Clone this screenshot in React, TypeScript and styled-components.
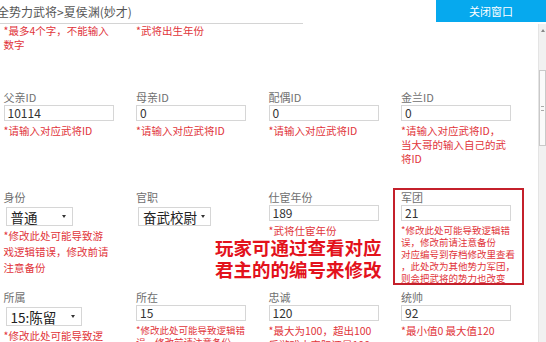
import React from "react";
import styled, { createGlobalStyle } from "styled-components";

type Control = { kind: "input" | "select"; value: string; width?: number };

type FieldData = {
  label?: string;
  control?: Control;
  hint?: string[];
  small?: boolean;
  lh?: number;
  highlight?: boolean;
};

const rows: FieldData[][] = [
  [
    { hint: ["*最多4个字，不能输入", "数字"] },
    { hint: ["*武将出生年份"] },
    {},
    {},
  ],
  [
    { label: "父亲ID", control: { kind: "input", value: "10114" }, hint: ["*请输入对应武将ID"] },
    { label: "母亲ID", control: { kind: "input", value: "0" }, hint: ["*请输入对应武将ID"] },
    { label: "配偶ID", control: { kind: "input", value: "0" }, hint: ["*请输入对应武将ID"] },
    {
      label: "金兰ID",
      control: { kind: "input", value: "0" },
      hint: ["*请输入对应武将ID，", "当大哥的输入自己的武", "将ID"],
    },
  ],
  [
    {
      label: "身份",
      control: { kind: "select", value: "普通", width: 67 },
      hint: ["*修改此处可能导致游", "戏逻辑错误，修改前请", "注意备份"],
      lh: 16,
    },
    { label: "官职", control: { kind: "select", value: "奋武校尉", width: 73 } },
    { label: "仕宦年份", control: { kind: "input", value: "189" }, hint: ["*武将仕宦年份"] },
    {
      label: "军团",
      control: { kind: "input", value: "21" },
      hint: [
        "*修改此处可能导致逻辑错",
        "误，修改前请注意备份",
        "对应编号到存档修改里查看",
        "，此处改为其他势力军团，",
        "则会把武将的势力也改变",
      ],
      small: true,
      lh: 12,
      highlight: true,
    },
  ],
  [
    {
      label: "所属",
      control: { kind: "select", value: "15:陈留", width: 76 },
      hint: ["*修改此处可能导致逻", "辑错误，修改前请注意"],
      lh: 16,
    },
    {
      label: "所在",
      control: { kind: "input", value: "15" },
      hint: ["*修改此处可能导致逻辑错", "误，修改前请注意备份"],
      small: true,
      lh: 12,
    },
    {
      label: "忠诚",
      control: { kind: "input", value: "120" },
      hint: ["*最大为100，超出100", "后游戏中实际还是100"],
      lh: 14,
    },
    { label: "统帅", control: { kind: "input", value: "92" }, hint: ["*最小值0 最大值120"] },
  ],
];

const GlobalStyle = createGlobalStyle`
  html, body {
    margin: 0;
    padding: 0;
    background: #ffffff;
    overflow: hidden;
  }
  body {
    font-family: "Noto Sans CJK SC", "Noto Sans", sans-serif;
  }
`;

const Page = styled.div`
  width: 546px;
  height: 342px;
  display: flex;
  flex-direction: column;
  overflow: hidden;
  background: #fff;
`;

const Header = styled.div`
  height: 24px;
  display: flex;
  align-items: flex-start;
  flex-shrink: 0;
`;

const Title = styled.div`
  width: 303px;
  height: 23px;
  border-bottom: 1px solid #d4d4d4;
  font-size: 12px;
  line-height: 24px;
  color: #555;
  white-space: nowrap;
  overflow: hidden;

  span {
    margin-left: -3px;
  }
`;

const CloseButton = styled.button`
  margin-left: auto;
  width: 110px;
  height: 22px;
  border: none;
  background: #06a9ee;
  color: #fff;
  font-family: inherit;
  font-size: 11px;
  padding: 0;
  cursor: pointer;
`;

const Body = styled.div`
  flex: 1;
  display: flex;
  min-height: 0;
`;

const FormArea = styled.div`
  flex: 1;
  overflow: hidden;
`;

const Grid = styled.div`
  display: grid;
  grid-template-columns: repeat(4, 110px);
  grid-template-rows: 67px 100px 100px 100px;
  column-gap: 22.5px;
  padding-left: 3.5px;
  align-items: start;
`;

const Cell = styled.div<{ $row: number; $col: number; $highlight?: boolean }>`
  grid-row: ${(p) => p.$row};
  grid-column: ${(p) => p.$col};
  position: relative;
  display: flex;
  flex-direction: column;
  align-items: flex-start;

  ${(p) =>
    p.$highlight &&
    `
    &::after {
      content: "";
      position: absolute;
      left: -8px;
      right: -13px;
      top: -3px;
      bottom: -1px;
      border: 2px solid #c4202b;
      pointer-events: none;
    }
  `}
`;

const Label = styled.div`
  font-size: 11px;
  line-height: 13px;
  color: #707070;
  white-space: nowrap;
`;

const Input = styled.div`
  box-sizing: border-box;
  margin-top: 1px;
  width: 110px;
  height: 16px;
  border: 1px solid #d6d6d6;
  padding-left: 3px;
  font-size: 12px;
  line-height: 14px;
  color: #333;
  background: #fff;
`;

const Select = styled.div<{ $w: number }>`
  box-sizing: border-box;
  margin: 3px 0 0 2px;
  width: ${(p) => p.$w}px;
  height: 19px;
  border: 1px solid #d6d6d6;
  padding: 0 6px 0 4px;
  display: flex;
  align-items: center;
  justify-content: space-between;
  font-size: 13.5px;
  color: #222;
  background: #fff;
  white-space: nowrap;

  &::after {
    content: "";
    flex-shrink: 0;
    margin-left: 4px;
    border-left: 2.5px solid transparent;
    border-right: 2.5px solid transparent;
    border-top: 3px solid #333;
  }
`;

const Hint = styled.div<{ $small?: boolean; $lh: number; $flush?: boolean }>`
  margin-top: ${(p) => (p.$flush ? 0 : p.$lh === 16 ? 2 : 3)}px;
  font-size: ${(p) => (p.$small ? 9.5 : 10.5)}px;
  line-height: ${(p) => p.$lh}px;
  color: #e1343a;
  white-space: nowrap;
`;

const Annotation = styled.div`
  grid-column: 2 / 4;
  grid-row: 3;
  justify-self: start;
  margin: 45px 0 0 79px;
  position: relative;
  z-index: 2;
  font-size: 18.5px;
  line-height: 22px;
  font-weight: 700;
  color: #e3121c;
  white-space: nowrap;
`;

const Scrollbar = styled.div`
  width: 7px;
  flex-shrink: 0;
  background: #f1f1f1;
  border-left: 1px solid #e4e4e4;
  display: flex;
  flex-direction: column;
  align-items: center;
`;

const UpArrow = styled.div`
  margin-top: 5px;
  border-left: 2px solid transparent;
  border-right: 2px solid transparent;
  border-bottom: 3px solid #888;
`;

const Thumb = styled.div`
  box-sizing: border-box;
  margin-top: 38px;
  width: 7px;
  height: 76px;
  background: #fafafa;
  border: 1px solid #c9c9c9;
  display: flex;
  align-items: center;
  justify-content: center;

  &::after {
    content: "";
    width: 3px;
    height: 3px;
    border-top: 1px solid #aaa;
    border-bottom: 1px solid #aaa;
  }
`;

const Field = ({ f, row, col }: { f: FieldData; row: number; col: number }) => (
  <Cell $row={row} $col={col} $highlight={f.highlight}>
    {f.label && <Label>{f.label}</Label>}
    {f.control?.kind === "input" && <Input>{f.control.value}</Input>}
    {f.control?.kind === "select" && (
      <Select $w={f.control.width ?? 70}>{f.control.value}</Select>
    )}
    {f.hint && (
      <Hint $small={f.small} $lh={f.lh ?? 14} $flush={!f.label}>
        {f.hint.map((line, i) => (
          <div key={i}>{line}</div>
        ))}
      </Hint>
    )}
  </Cell>
);

const App = () => {
  return (
    <Page>
      <GlobalStyle />
      <Header>
        <Title>
          <span>全势力武将&gt;夏侯渊(妙才)</span>
        </Title>
        <CloseButton>关闭窗口</CloseButton>
      </Header>
      <Body>
        <FormArea>
          <Grid>
            {rows.map((row, r) =>
              row.map((f, c) => (
                <Field key={`${r}-${c}`} f={f} row={r + 1} col={c + 1} />
              ))
            )}
            <Annotation>
              玩家可通过查看对应
              <br />
              君主的的编号来修改
            </Annotation>
          </Grid>
        </FormArea>
        <Scrollbar>
          <UpArrow />
          <Thumb />
        </Scrollbar>
      </Body>
    </Page>
  );
};

export default App;
